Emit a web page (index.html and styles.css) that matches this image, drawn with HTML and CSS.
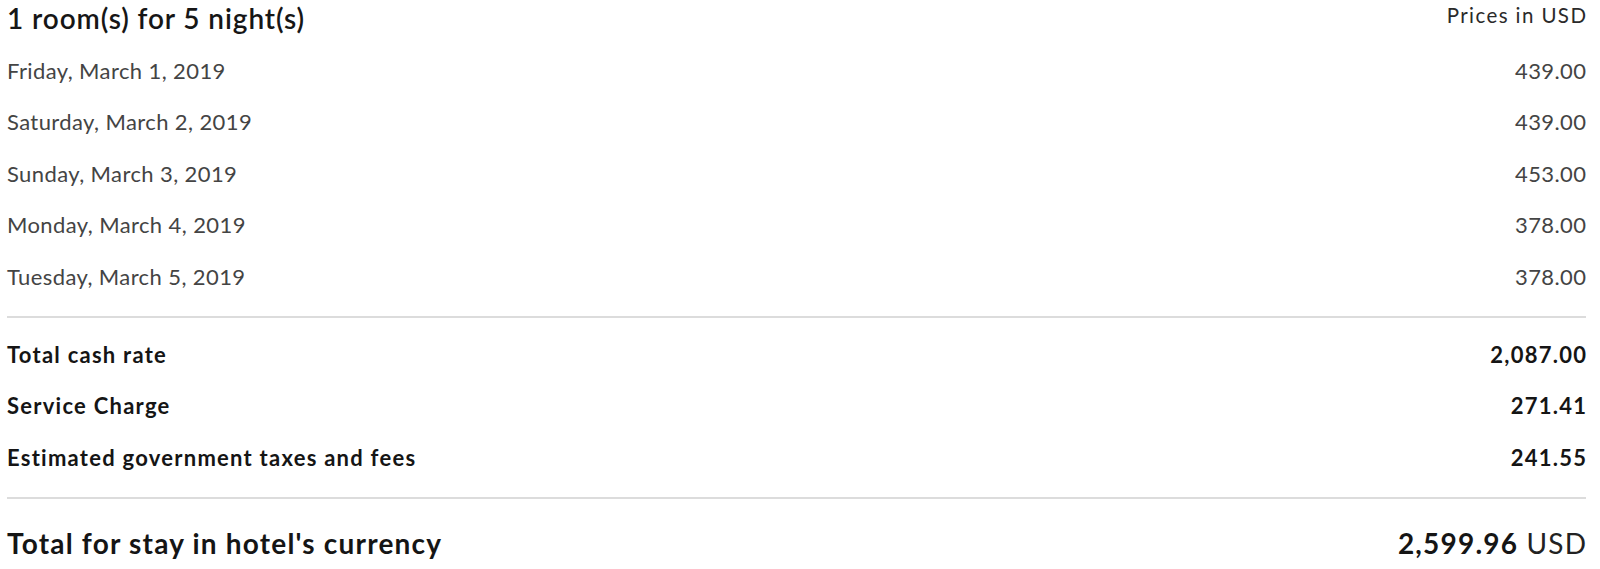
FILE: index.html
```html
<!DOCTYPE html>
<html lang="en">
<head>
<meta charset="utf-8">
<title>Stay summary</title>
<link rel="stylesheet" href="styles.css">
</head>
<body>
<div class="summary">
  <div class="header">
    <h2 class="title">1 room(s) for 5 night(s)</h2>
    <span class="currency-note">Prices in USD</span>
  </div>
  <div class="nights">
    <div class="row"><span>Friday, March 1, 2019</span><span>439.00</span></div>
    <div class="row"><span>Saturday, March 2, 2019</span><span>439.00</span></div>
    <div class="row"><span>Sunday, March 3, 2019</span><span>453.00</span></div>
    <div class="row"><span>Monday, March 4, 2019</span><span>378.00</span></div>
    <div class="row"><span>Tuesday, March 5, 2019</span><span>378.00</span></div>
  </div>
  <div class="fees">
    <div class="row bold"><span>Total cash rate</span><span>2,087.00</span></div>
    <div class="row bold"><span>Service Charge</span><span>271.41</span></div>
    <div class="row bold"><span>Estimated government taxes and fees</span><span>241.55</span></div>
  </div>
  <div class="total">
    <span class="total-label">Total for stay in hotel's currency</span>
    <span class="total-value"><b>2,599.96</b> USD</span>
  </div>
</div>
</body>
</html>
```
FILE: styles.css
```css
html, body {
  margin: 0;
  padding: 0;
  background: #fff;
}
body {
  font-family: Lato, "Noto Sans", sans-serif;
  color: #444;
}
.summary {
  padding: 0 14px 0 7px;
}
.header {
  display: flex;
  justify-content: space-between;
  align-items: flex-start;
  height: 45px;
}
.title {
  margin: 0;
  font-size: 28px;
  font-weight: 600;
  letter-spacing: 0.9px;
  color: #161616;
  line-height: 36px;
}
.currency-note {
  font-size: 20.5px;
  letter-spacing: 1.4px;
  margin-right: -1.4px;
  color: #2a2a2a;
  line-height: 30px;
}
.row {
  display: flex;
  justify-content: space-between;
  font-size: 22px;
  letter-spacing: 0.4px;
  line-height: 51.4px;
  height: 51.4px;
}
.row span:last-child {
  margin-right: -0.4px;
}
.nights {
  padding-bottom: 14px;
  border-bottom: 2px solid #dcdcdc;
}
.fees {
  padding-top: 11px;
  padding-bottom: 14px;
  border-bottom: 2px solid #dcdcdc;
}
.row.bold {
  font-weight: 700;
  letter-spacing: 1.25px;
  color: #151515;
}
.row.bold span:last-child {
  margin-right: -1.25px;
}
.total {
  display: flex;
  justify-content: space-between;
  padding-top: 26px;
  font-size: 28px;
  letter-spacing: 1.2px;
  line-height: 36px;
  color: #151515;
}
.total-label {
  font-weight: 700;
}
.total-value {
  color: #222;
  margin-right: -1.2px;
}
.total-value b {
  font-weight: 700;
  color: #151515;
}
```
